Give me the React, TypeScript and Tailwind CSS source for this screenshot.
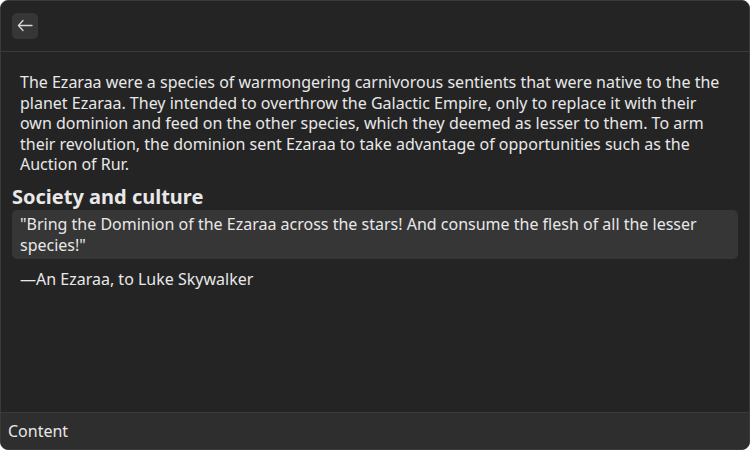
export default function App() {
  return (
    <div className="w-[750px] h-[450px] bg-white">
      <div
        className="w-full h-full flex flex-col overflow-hidden rounded-[8px] border border-[#3a3a3a] bg-[#242424] text-[#e8e8e8]"
        style={{ fontFamily: '"Noto Sans", sans-serif' }}
      >
        <header className="h-[51px] shrink-0 border-b border-[#3a3a3a] flex items-center px-[11px]">
          <button className="w-[26px] h-[26px] rounded-[5px] bg-[#363636] flex items-center justify-center text-[#d8d8d8]">
            <svg width="26" height="26" viewBox="0 0 26 26" fill="none" stroke="currentColor" strokeWidth="1.3" strokeLinecap="round" strokeLinejoin="round">
              <path d="M6.5 12.5h13.5" />
              <path d="M11 7.5l-4.5 5 4.5 5" />
            </svg>
          </button>
        </header>

        <main className="flex-1 px-[11px] pt-[20px]">
          <p className="px-[8px] text-[16px] leading-[20.6px]">
            The Ezaraa were a species of warmongering carnivorous sentients that were native to the the
            planet Ezaraa. They intended to overthrow the Galactic Empire, only to replace it with their
            own dominion and feed on the other species, which they deemed as lesser to them. To arm
            their revolution, the dominion sent Ezaraa to take advantage of opportunities such as the
            Auction of Rur.
          </p>
          <h2 className="mt-[10px] text-[20px] leading-[24px] font-bold">Society and culture</h2>
          <blockquote className="mt-[1px] rounded-[5px] bg-[#363636] px-[8px] py-[4px] text-[16px] leading-[20.6px]">
            "Bring the Dominion of the Ezaraa across the stars! And consume the flesh of all the lesser
            species!"
          </blockquote>
          <p className="mt-[10px] px-[8px] text-[16px] leading-[20.6px]">—An Ezaraa, to Luke Skywalker</p>
        </main>

        <footer className="h-[37px] shrink-0 border-t border-[#3a3a3a] bg-[#2e2e2e] flex items-center px-[7px] text-[16px]">
          Content
        </footer>
      </div>
    </div>
  );
}
